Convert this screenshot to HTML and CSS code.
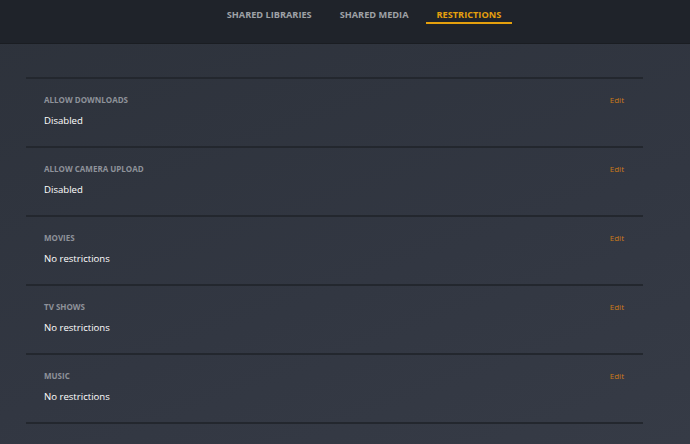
FILE: index.html
```html
<!DOCTYPE html>
<html>
<head>
<meta charset="utf-8">
<link rel="stylesheet" href="styles.css">
</head>
<body>
<header class="topbar">
  <nav class="tabs">
    <a class="tab">Shared Libraries</a>
    <a class="tab">Shared Media</a>
    <a class="tab active">Restrictions</a>
  </nav>
</header>
<main class="content">
  <div class="list">
    <div class="row">
      <div class="row-text">
        <div class="label">Allow Downloads</div>
        <div class="value">Disabled</div>
      </div>
      <a class="edit">Edit</a>
    </div>
    <div class="row">
      <div class="row-text">
        <div class="label">Allow Camera Upload</div>
        <div class="value">Disabled</div>
      </div>
      <a class="edit">Edit</a>
    </div>
    <div class="row">
      <div class="row-text">
        <div class="label">Movies</div>
        <div class="value">No restrictions</div>
      </div>
      <a class="edit">Edit</a>
    </div>
    <div class="row">
      <div class="row-text">
        <div class="label">TV Shows</div>
        <div class="value">No restrictions</div>
      </div>
      <a class="edit">Edit</a>
    </div>
    <div class="row">
      <div class="row-text">
        <div class="label">Music</div>
        <div class="value">No restrictions</div>
      </div>
      <a class="edit">Edit</a>
    </div>
  </div>
</main>
</body>
</html>
```
FILE: styles.css
```css
html, body {
  margin: 0;
  padding: 0;
  height: 100%;
}
body {
  font-family: "Open Sans", "Noto Sans", sans-serif;
  background: linear-gradient(160deg, #2d323b 0%, #323742 60%, #363b46 100%);
  overflow: hidden;
}
.topbar {
  height: 44px;
  background: #1f232a;
  border-bottom: 1px solid #1a1d22;
  box-sizing: border-box;
  display: flex;
  justify-content: center;
}
.tabs {
  display: flex;
  gap: 6px;
  margin-left: 38px;
  align-items: flex-start;
}
.tab {
  display: block;
  padding: 7px 11px 0;
  height: 15px;
  font-size: 9.2px;
  font-weight: 700;
  line-height: 16px;
  text-transform: uppercase;
  color: #9ea1a6;
  border-bottom: 2px solid transparent;
}
.tab.active {
  color: #e5a00d;
  border-bottom-color: #e5a00d;
}
.content {
  padding: 33px 47px 0 26px;
}
.list {
  border-top: 2px solid #23272e;
}
.row {
  display: flex;
  justify-content: space-between;
  align-items: flex-start;
  padding: 15px 19px 18px 18px;
  border-bottom: 2px solid #23272e;
}
.row-text {
  display: flex;
  flex-direction: column;
  gap: 8px;
}
.label {
  font-size: 8px;
  line-height: 12px;
  font-weight: 700;
  text-transform: uppercase;
  color: #8e929a;
}
.value {
  font-size: 9.6px;
  line-height: 14px;
  font-weight: 400;
  color: #ffffff;
}
.edit {
  font-size: 8px;
  line-height: 12px;
  color: #cc7b19;
}
```
